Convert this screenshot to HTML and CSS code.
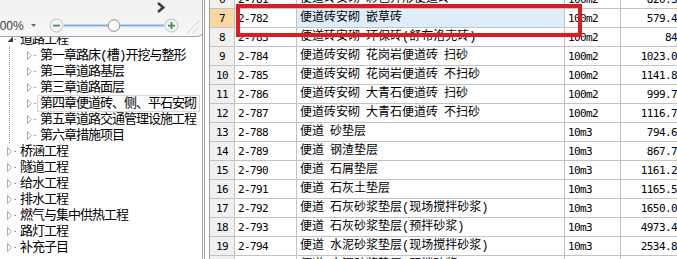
FILE: index.html
```html
<!DOCTYPE html>
<html lang="zh-CN">
<head>
<meta charset="utf-8">
<title>定额库</title>
<link rel="stylesheet" href="styles.css">
</head>
<body>
<div class="app">
  <div class="tree-pane">
    <div class="zoombar">
      <div class="zb-top">
        <svg class="chev" width="10" height="11" viewBox="0 0 10 11"><polyline points="2,1 7.2,5.5 2,10" fill="none" stroke="#3d3d3d" stroke-width="2.6"/></svg>
      </div>
      <div class="zb-row">
        <span class="pct">100%</span>
        <svg class="caret" width="5" height="3" viewBox="0 0 5 3"><polygon points="0,0 5,0 2.5,3" fill="#6b6b6b"/></svg>
        <svg class="btn minus" width="15" height="15" viewBox="0 0 15 15"><circle cx="7.5" cy="7.5" r="6.5" fill="#f4f4f4" stroke="#b9c3cc"/><rect x="4" y="6.7" width="7" height="1.8" fill="#3e9c46"/></svg>
        <svg class="slider" width="100" height="15" viewBox="0 0 100 15"><rect x="0" y="6.5" width="100" height="2" fill="#7fb1e3"/><circle cx="50" cy="7.5" r="5.8" fill="#fbfbfb" stroke="#8d8d8d"/></svg>
        <svg class="btn plus" width="15" height="15" viewBox="0 0 15 15"><circle cx="7.5" cy="7.5" r="6.5" fill="#f4f4f4" stroke="#b9c3cc"/><rect x="4" y="6.7" width="7" height="1.8" fill="#3e9c46"/><rect x="6.6" y="4.1" width="1.8" height="7" fill="#3e9c46"/></svg>
        <svg class="grip" width="14" height="14" viewBox="0 0 14 14"><line x1="13.5" y1="0.5" x2="0.5" y2="13.5" stroke="#cfd3d8"/><line x1="13.5" y1="6.5" x2="6.5" y2="13.5" stroke="#cfd3d8"/></svg>
      </div>
    </div>
    <ul class="tree">
      <li class="node l0">
        <div class="row"><svg class="tog" width="6" height="9" viewBox="0 0 6 9"><polygon points="6,1.5 6,7 0.5,7" fill="#3c3c3c"/></svg><span class="dot"></span><span class="label">道路工程</span></div>
        <ul class="kids">
          <li class="node l1"><div class="row"><svg class="tog" width="6" height="9" viewBox="0 0 6 9"><polygon points="0.5,0.5 4.5,4.5 0.5,8.5" fill="#fff" stroke="#a9a9a9"/></svg><span class="dot"></span><span class="label">第一章路床(槽)开挖与整形</span></div></li>
          <li class="node l1"><div class="row"><svg class="tog" width="6" height="9" viewBox="0 0 6 9"><polygon points="0.5,0.5 4.5,4.5 0.5,8.5" fill="#fff" stroke="#a9a9a9"/></svg><span class="dot"></span><span class="label">第二章道路基层</span></div></li>
          <li class="node l1"><div class="row"><svg class="tog" width="6" height="9" viewBox="0 0 6 9"><polygon points="0.5,0.5 4.5,4.5 0.5,8.5" fill="#fff" stroke="#a9a9a9"/></svg><span class="dot"></span><span class="label">第三章道路面层</span></div></li>
          <li class="node l1"><div class="row"><svg class="tog" width="6" height="9" viewBox="0 0 6 9"><polygon points="0.5,0.5 4.5,4.5 0.5,8.5" fill="#fff" stroke="#a9a9a9"/></svg><span class="dot"></span><span class="label selected">第四章便道砖、侧、平石安砌</span></div></li>
          <li class="node l1"><div class="row"><svg class="tog" width="6" height="9" viewBox="0 0 6 9"><polygon points="0.5,0.5 4.5,4.5 0.5,8.5" fill="#fff" stroke="#a9a9a9"/></svg><span class="dot"></span><span class="label">第五章道路交通管理设施工程</span></div></li>
          <li class="node l1"><div class="row"><svg class="tog" width="6" height="9" viewBox="0 0 6 9"><polygon points="0.5,0.5 4.5,4.5 0.5,8.5" fill="#fff" stroke="#a9a9a9"/></svg><span class="dot"></span><span class="label">第六章措施项目</span></div></li>
        </ul>
      </li>
      <li class="node l0"><div class="row"><svg class="tog" width="6" height="9" viewBox="0 0 6 9"><polygon points="0.5,0.5 4.5,4.5 0.5,8.5" fill="#fff" stroke="#a9a9a9"/></svg><span class="dot"></span><span class="label">桥涵工程</span></div></li>
      <li class="node l0"><div class="row"><svg class="tog" width="6" height="9" viewBox="0 0 6 9"><polygon points="0.5,0.5 4.5,4.5 0.5,8.5" fill="#fff" stroke="#a9a9a9"/></svg><span class="dot"></span><span class="label">隧道工程</span></div></li>
      <li class="node l0"><div class="row"><svg class="tog" width="6" height="9" viewBox="0 0 6 9"><polygon points="0.5,0.5 4.5,4.5 0.5,8.5" fill="#fff" stroke="#a9a9a9"/></svg><span class="dot"></span><span class="label">给水工程</span></div></li>
      <li class="node l0"><div class="row"><svg class="tog" width="6" height="9" viewBox="0 0 6 9"><polygon points="0.5,0.5 4.5,4.5 0.5,8.5" fill="#fff" stroke="#a9a9a9"/></svg><span class="dot"></span><span class="label">排水工程</span></div></li>
      <li class="node l0"><div class="row"><svg class="tog" width="6" height="9" viewBox="0 0 6 9"><polygon points="0.5,0.5 4.5,4.5 0.5,8.5" fill="#fff" stroke="#a9a9a9"/></svg><span class="dot"></span><span class="label">燃气与集中供热工程</span></div></li>
      <li class="node l0"><div class="row"><svg class="tog" width="6" height="9" viewBox="0 0 6 9"><polygon points="0.5,0.5 4.5,4.5 0.5,8.5" fill="#fff" stroke="#a9a9a9"/></svg><span class="dot"></span><span class="label">路灯工程</span></div></li>
      <li class="node l0"><div class="row"><svg class="tog" width="6" height="9" viewBox="0 0 6 9"><polygon points="0.5,0.5 4.5,4.5 0.5,8.5" fill="#fff" stroke="#a9a9a9"/></svg><span class="dot"></span><span class="label">补充子目</span></div></li>
    </ul>
  </div>
  <div class="splitter"></div>
  <div class="grid-pane">
    <table class="grid">
      <tbody>
        <tr><td class="c-num">6</td><td class="c-code">2-781</td><td class="c-name">便道砖安砌 彩色异形便道砖</td><td class="c-unit">100m2</td><td class="c-price">820.36</td></tr>
        <tr class="current"><td class="c-num">7</td><td class="c-code">2-782</td><td class="c-name">便道砖安砌 嵌草砖</td><td class="c-unit">100m2</td><td class="c-price">579.45</td></tr>
        <tr><td class="c-num">8</td><td class="c-code">2-783</td><td class="c-name">便道砖安砌 环保砖(舒布洛克砖)</td><td class="c-unit">100m2</td><td class="c-price">843</td></tr>
        <tr><td class="c-num">9</td><td class="c-code">2-784</td><td class="c-name">便道砖安砌 花岗岩便道砖 扫砂</td><td class="c-unit">100m2</td><td class="c-price">1023.02</td></tr>
        <tr><td class="c-num">10</td><td class="c-code">2-785</td><td class="c-name">便道砖安砌 花岗岩便道砖 不扫砂</td><td class="c-unit">100m2</td><td class="c-price">1141.87</td></tr>
        <tr><td class="c-num">11</td><td class="c-code">2-786</td><td class="c-name">便道砖安砌 大青石便道砖 扫砂</td><td class="c-unit">100m2</td><td class="c-price">999.73</td></tr>
        <tr><td class="c-num">12</td><td class="c-code">2-787</td><td class="c-name">便道砖安砌 大青石便道砖 不扫砂</td><td class="c-unit">100m2</td><td class="c-price">1116.77</td></tr>
        <tr><td class="c-num">13</td><td class="c-code">2-788</td><td class="c-name">便道 砂垫层</td><td class="c-unit">10m3</td><td class="c-price">794.61</td></tr>
        <tr><td class="c-num">14</td><td class="c-code">2-789</td><td class="c-name">便道 钢渣垫层</td><td class="c-unit">10m3</td><td class="c-price">867.72</td></tr>
        <tr><td class="c-num">15</td><td class="c-code">2-790</td><td class="c-name">便道 石屑垫层</td><td class="c-unit">10m3</td><td class="c-price">1161.20</td></tr>
        <tr><td class="c-num">16</td><td class="c-code">2-791</td><td class="c-name">便道 石灰土垫层</td><td class="c-unit">10m3</td><td class="c-price">1165.53</td></tr>
        <tr><td class="c-num">17</td><td class="c-code">2-792</td><td class="c-name">便道 石灰砂浆垫层(现场搅拌砂浆)</td><td class="c-unit">10m3</td><td class="c-price">1650.08</td></tr>
        <tr><td class="c-num">18</td><td class="c-code">2-793</td><td class="c-name">便道 石灰砂浆垫层(预拌砂浆)</td><td class="c-unit">10m3</td><td class="c-price">4973.42</td></tr>
        <tr><td class="c-num">19</td><td class="c-code">2-794</td><td class="c-name">便道 水泥砂浆垫层(现场搅拌砂浆)</td><td class="c-unit">10m3</td><td class="c-price">2534.80</td></tr>
        <tr><td class="c-num">20</td><td class="c-code">2-795</td><td class="c-name">便道 水泥砂浆垫层(预拌砂浆)</td><td class="c-unit">10m3</td><td class="c-price">5860.10</td></tr>
      </tbody>
    </table>
    <div class="callout"></div>
  </div>
</div>
</body>
</html>
```

FILE: styles.css
```css
* { box-sizing: border-box; }
html, body { margin: 0; padding: 0; }
body {
  width: 677px;
  height: 259px;
  overflow: hidden;
  background: #fff;
  font-family: "Noto Sans CJK SC", "Noto Sans", sans-serif;
  color: #000;
}
.app {
  display: flex;
  height: 259px;
}

/* ---------- left tree pane ---------- */
.tree-pane {
  position: relative;
  width: 205px;
  flex: none;
  border-right: 3px double #a3a3a3;
  overflow: hidden;
}
.splitter {
  width: 4px;
  flex: none;
  background: #fff;
}

.zoombar {
  position: absolute;
  left: -10px;
  top: -10px;
  width: 215px;
  height: 47px;
  border: 1px solid #9aa6b6;
  border-radius: 0 0 8px 0;
  background: linear-gradient(#efefef, #f7f7f7);
  z-index: 2;
  display: flex;
  flex-direction: column;
}
.zb-top {
  flex: none;
  height: 24px;
  display: flex;
  justify-content: flex-end;
  align-items: flex-end;
  padding: 0 38px 2px 0;
}
.chev { flex: none; display: block; }
.zb-row {
  flex: none;
  height: 21px;
  display: flex;
  align-items: center;
  padding-left: 2px;
  font-family: "Liberation Sans", Arial, sans-serif;
  font-size: 12px;
  color: #3c3c3c;
}
.zb-row > * { flex: none; }
.pct { width: 33px; }
.caret { margin-left: 5px; }
.minus { margin-left: 13px; }
.grip { margin-left: 7px; align-self: flex-end; margin-bottom: 2px; }

.tree {
  list-style: none;
  margin: 31px 0 0 0;
  padding: 0;
  font-family: "Liberation Mono", "Noto Sans CJK SC", sans-serif;
  font-size: 13px;
  letter-spacing: -1px;
}
.tree ul { list-style: none; margin: 0; padding: 0; }
.row {
  height: 16px;
  display: flex;
  align-items: center;
  white-space: nowrap;
}
.l0 > .row { padding-left: 7px; }
.kids {
  margin-left: 9px !important;
  border-left: 1px dotted #9c9c9c;
}
.l1 > .row { padding-left: 17px; }
.tog { flex: none; }
.dot {
  width: 2px;
  height: 1px;
  margin-left: 1px;
  background: #a0a0a0;
  flex: none;
}
.label {
  margin-left: 1px;
  height: 17px;
  line-height: 15px;
  padding: 0 2px;
  border: 1px solid transparent;
}
.label.selected {
  border-color: #d9d9d9;
  background: #fafafa;
  padding-right: 3px;
}

/* ---------- right grid pane ---------- */
.grid-pane {
  position: relative;
  flex: 1;
  overflow: hidden;
  border-left: 1px solid #a0a0a0;
}
.grid {
  border-collapse: separate;
  border-spacing: 0;
  table-layout: fixed;
  width: 481px;
  margin-top: -10px;
  font-size: 12px;
}
.grid td {
  height: 19px;
  padding: 0 0 0 3px;
  border-right: 1px solid #c3c3c3;
  border-bottom: 1px solid #c3c3c3;
  white-space: nowrap;
  overflow: hidden;
  line-height: 17px;
}
.c-num, .c-code, .c-unit, .c-price {
  font-family: "DejaVu Sans Mono", monospace;
  font-size: 11px;
  letter-spacing: -0.6px;
}
.c-num {
  width: 25px;
  background: #f0f0f0;
  text-align: center;
  padding: 0 !important;
}
.c-code { width: 62px; }
.c-name {
  width: 268px;
  font-family: "Liberation Mono", "Noto Sans CJK SC", sans-serif;
  word-spacing: -1.2px;
}
.c-unit { width: 56px; }
.c-price {
  width: 70px;
  text-align: right;
  padding: 0 7px 0 0 !important;
}
.current .c-num { background: #fbd8a0; }
.current .c-name { background: #dfedfb; }

.callout {
  position: absolute;
  left: 26px;
  top: 4px;
  width: 346px;
  height: 33px;
  border: 4px solid #dc1c22;
}
```
